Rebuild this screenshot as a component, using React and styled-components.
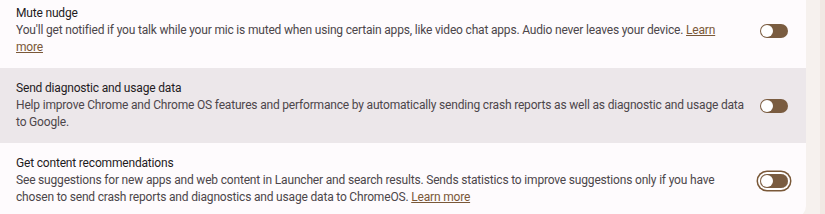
import React from 'react';
import styled, { createGlobalStyle } from 'styled-components';

const GlobalStyle = createGlobalStyle`
  html, body {
    margin: 0;
    padding: 0;
    background: #f6f1ee;
  }
  body {
    font-family: Roboto, 'Noto Sans', sans-serif;
  }
`;

const Page = styled.div`
  display: flex;
  width: 825px;
  height: 214px;
  overflow: hidden;
`;

const Card = styled.div`
  width: 806px;
  flex: none;
  margin-top: -7px;
  align-self: flex-start;
  background: #fefbfd;
  border-radius: 0 0 12px 0;
  overflow: hidden;
`;

const Gutter = styled.div`
  flex: 1;
`;

const Scroll = styled.div`
  width: 5px;
  background: #f1e9e4;
`;

const Row = styled.div`
  display: flex;
  align-items: center;
  gap: 12px;
  padding: 12px 18px 12px 16px;
  min-height: 50px;
  background: ${(p) => (p.$active ? '#ece7ea' : 'transparent')};
`;

const Text = styled.div`
  flex: 1;
  font-size: 12px;
  letter-spacing: -0.18px;
  line-height: 17px;
`;

const Title = styled.div`
  color: #1f1b1e;
`;

const Desc = styled.div`
  color: #4c464a;
  max-width: ${(p) => (p.$narrow ? '720px' : 'none')};
`;

const Link = styled.a`
  color: #7a5838;
  text-decoration: underline;
  cursor: pointer;
`;

const ToggleWrap = styled.div`
  flex: none;
  width: 28px;
  height: 14px;
  border-radius: 8px;
  box-shadow: ${(p) =>
    p.$focus ? '0 0 0 2px #ffffff, 0 0 0 3.5px #7a5838' : 'none'};
`;

const Track = styled.div`
  width: 28px;
  height: 14px;
  border-radius: 7px;
  background: #7a5c40;
  position: relative;
`;

const Knob = styled.div`
  position: absolute;
  left: 1px;
  top: 1px;
  width: 12px;
  height: 12px;
  border-radius: 50%;
  background: #ffffff;
`;

function Toggle({ focus }) {
  return (
    <ToggleWrap $focus={focus}>
      <Track>
        <Knob />
      </Track>
    </ToggleWrap>
  );
}

export default function App() {
  return (
    <Page>
      <GlobalStyle />
      <Card>
        <Row>
          <Text>
            <Title>Mute nudge</Title>
            <Desc $narrow>
              You'll get notified if you talk while your mic is muted when using certain apps, like video chat apps. Audio never leaves your device. <Link>Learn more</Link>
            </Desc>
          </Text>
          <Toggle />
        </Row>
        <Row $active>
          <Text>
            <Title>Send diagnostic and usage data</Title>
            <Desc>
              Help improve Chrome and Chrome OS features and performance by automatically sending crash reports as well as diagnostic and usage data to Google.
            </Desc>
          </Text>
          <Toggle />
        </Row>
        <Row>
          <Text>
            <Title>Get content recommendations</Title>
            <Desc>
              See suggestions for new apps and web content in Launcher and search results. Sends statistics to improve suggestions only if you have chosen to send crash reports and diagnostics and usage data to ChromeOS. <Link>Learn more</Link>
            </Desc>
          </Text>
          <Toggle focus />
        </Row>
      </Card>
      <Gutter />
      <Scroll />
    </Page>
  );
}
